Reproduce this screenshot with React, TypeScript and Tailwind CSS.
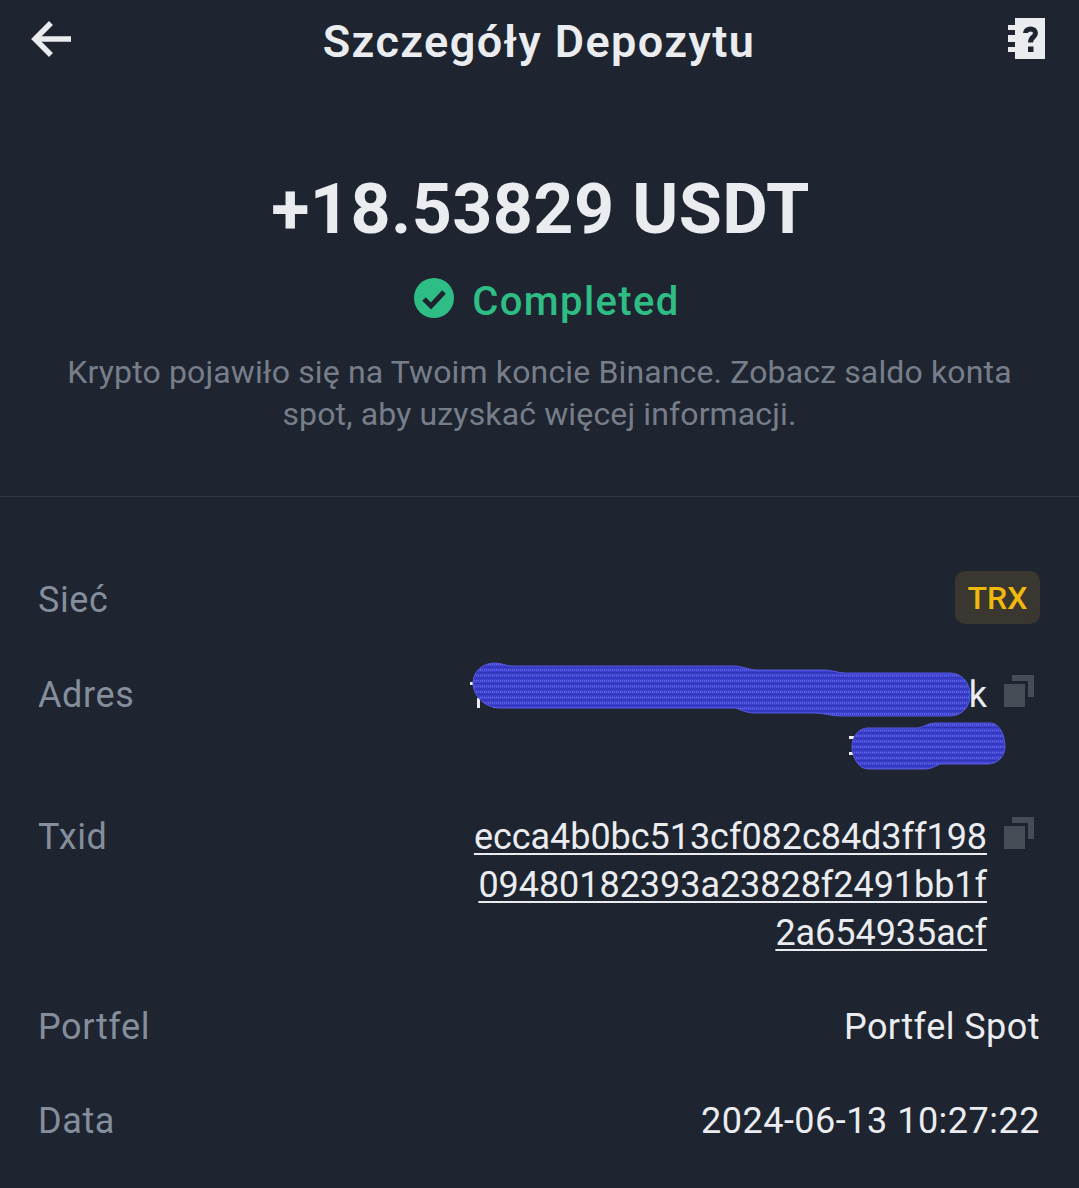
import type { ReactNode } from 'react';

function BackIcon() {
  return (
    <svg width="44" height="36" viewBox="0 0 44 36" fill="none" stroke="#eaecef" strokeWidth="5.5" className="-mt-[7px]">
      <path d="M19 4 L5 18 L19 32" strokeLinecap="square" />
      <path d="M6 18 H41" />
    </svg>
  );
}

function GuideIcon() {
  return (
    <svg width="37" height="42" viewBox="0 0 37 42" className="-mt-[6px]">
      <path d="M7 0 H37 V41 H7 V34 H0 V29 H7 V24 H0 V17 H7 V12 H0 V7 H7 Z" fill="#eaecef" />
      <path d="M17.5 15 C17.5 9.5 27.5 9.5 27.5 15 C27.5 19.5 22.5 18.5 22.5 24.5" fill="none" stroke="#1e2530" strokeWidth="5" />
      <rect x="20" y="28.5" width="5.5" height="5.5" fill="#1e2530" />
    </svg>
  );
}

function CopyIcon() {
  return (
    <svg width="30" height="32" viewBox="0 0 30 32" className="shrink-0">
      <path d="M8 0 H30 V22 H24 V6 H8 Z" fill="#474d57" />
      <rect x="0" y="9" width="21" height="23" fill="#474d57" />
    </svg>
  );
}

// zamazany adres, wspolrzedne jak na stronie
function Scribble() {
  return (
    <svg width="540" height="120" viewBox="470 655 540 120" className="absolute -top-[15px] left-0">
      <defs>
        <pattern id="scribble-lines" width="2" height="5.5" patternUnits="userSpaceOnUse">
          <rect width="2" height="5.5" fill="#3c40cf" />
          <rect width="2" height="1" fill="#2f33b4" />
          <rect y="3" width="1" height="1" fill="#8285f2" />
        </pattern>
      </defs>
      <g fill="#eaecef">
        <rect x="469" y="681" width="5" height="3" />
        <rect x="477" y="697" width="3" height="10" />
        <rect x="493" y="705" width="4" height="2" />
        <rect x="849" y="735" width="5" height="3" />
        <rect x="849" y="751" width="4" height="3" />
      </g>
      <g fill="url(#scribble-lines)" stroke="#5659e0" strokeWidth="1">
        <path d="M495 662 C502 662 506 665 512 665 H735 C745 666 750 669 757 669 H825 C832 669 838 672 845 672 H950 C962 672 970 682 970 694 C970 706 962 715 950 715 H840 C830 715 825 712 815 712 H755 C745 712 740 708 735 707 H500 C485 707 473 695 473 682 C473 670 483 662 495 662 Z" />
        <path d="M868 727 H918 C924 726 928 722 935 722 H990 C1000 722 1005 735 1005 746 C1005 755 998 763 988 763 H940 C934 766 930 768 925 768 H868 C858 768 852 755 852 746 C852 736 858 727 868 727 Z" />
      </g>
    </svg>
  );
}

function Row({ label, children, className }: { label: string; children: ReactNode; className?: string }) {
  return (
    <div className={`flex justify-between ${className ?? ''}`}>
      <div className="text-[36px] leading-[48px] tracking-[0.6px] text-[#848e9c]">{label}</div>
      {children}
    </div>
  );
}

export default function App() {
  return (
    <div
      className="h-[1188px] w-[1079px] overflow-hidden bg-[#1e2530] text-[#eaecef]"
      style={{ fontFamily: 'Roboto, "Noto Sans", sans-serif' }}
    >
      {/* Naglowek */}
      <header className="flex h-[84px] items-center justify-between pl-[30px] pr-[34px]">
        <BackIcon />
        <h1 className="-ml-[4px] text-[45px] font-semibold tracking-[1.4px]">Szczegóły Depozytu</h1>
        <GuideIcon />
      </header>

      {/* Kwota i status */}
      <section className="flex h-[413px] flex-col items-center border-b border-[#333a44] pt-[81px]">
        <div className="ml-[2px] text-[70px] leading-[88px] font-bold tracking-[0.4px]">+18.53829 USDT</div>
        <div className="ml-[15px] mt-[22px] flex items-center gap-[18px]">
          <svg width="40" height="40" viewBox="0 0 40 40" className="-mt-[8px]">
            <circle cx="20" cy="20" r="20" fill="#2ebd85" />
            <path d="M10 21 L17 28 L30 14" fill="none" stroke="#1e2530" strokeWidth="5" />
          </svg>
          <span className="text-[40px] leading-[54px] font-medium tracking-[1.4px] text-[#2ebd85]">Completed</span>
        </div>
        <p className="mt-[22px] w-[1000px] text-center text-[32px] leading-[42px] tracking-[0.14px] text-[#777e8a]">
          Krypto pojawiło się na Twoim koncie Binance. Zobacz saldo konta spot, aby uzyskać więcej informacji.
        </p>
      </section>

      {/* Szczegoly */}
      <section className="pl-[38px] pr-[39px] pt-[74px]">
        <Row label="Sieć" className="items-start [&>div]:pt-[5px]">
          <span className="flex h-[53px] w-[85px] items-center justify-center rounded-[10px] bg-[#3a3730] text-[32px] font-medium text-[#f0b90b]">
            TRX
          </span>
        </Row>

        <Row label="Adres" className="mt-[47px]">
          <div className="flex items-start gap-[17px] pr-[6px]">
            <div className="relative h-[96px] w-[517px]">
              <span className="absolute right-0 top-0 text-[36px] leading-[48px]">k</span>
              <Scribble />
            </div>
            <div className="pt-[4px]">
              <CopyIcon />
            </div>
          </div>
        </Row>

        <Row label="Txid" className="mt-[46px]">
          <div className="flex items-start gap-[17px] pr-[6px]">
            <div className="text-right text-[36px] leading-[48px] tracking-[-0.05px] underline decoration-2 underline-offset-[4px]">
              <div>ecca4b0bc513cf082c84d3ff198</div>
              <div>09480182393a23828f2491bb1f</div>
              <div>2a654935acf</div>
            </div>
            <div className="pt-[4px]">
              <CopyIcon />
            </div>
          </div>
        </Row>

        <Row label="Portfel" className="mt-[46px]">
          <span className="text-[36px] leading-[48px] tracking-[0.45px]">Portfel Spot</span>
        </Row>

        <Row label="Data" className="mt-[46px]">
          <span className="text-[36px] leading-[48px] tracking-[0.5px]">2024-06-13 10:27:22</span>
        </Row>
      </section>
    </div>
  );
}
